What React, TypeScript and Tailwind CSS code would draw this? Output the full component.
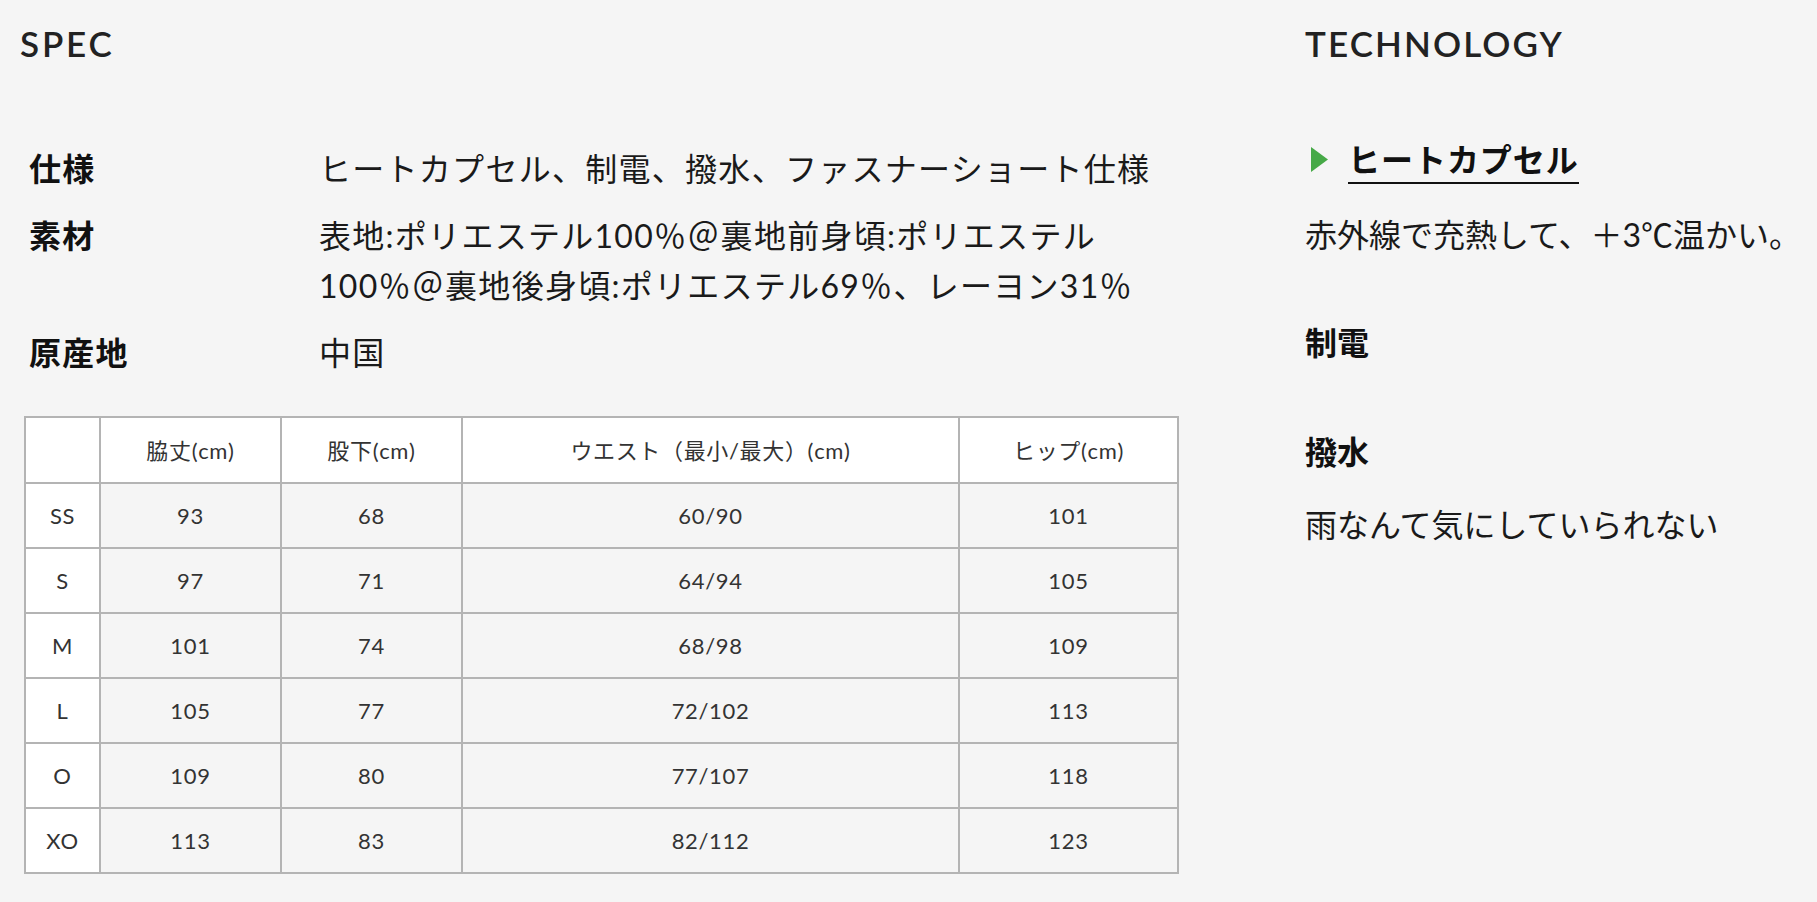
import React from "react";

// サイズ表データ
const sizeRows = [
  { size: "SS", length: "93", inseam: "68", waist: "60/90", hip: "101" },
  { size: "S", length: "97", inseam: "71", waist: "64/94", hip: "105" },
  { size: "M", length: "101", inseam: "74", waist: "68/98", hip: "109" },
  { size: "L", length: "105", inseam: "77", waist: "72/102", hip: "113" },
  { size: "O", length: "109", inseam: "80", waist: "77/107", hip: "118" },
  { size: "XO", length: "113", inseam: "83", waist: "82/112", hip: "123" },
];

const specs = [
  { label: "仕様", value: ["ヒートカプセル、制電、撥水、ファスナーショート仕様"] },
  {
    label: "素材",
    value: [
      "表地:ポリエステル100％＠裏地前身頃:ポリエステル",
      "100％＠裏地後身頃:ポリエステル69％、レーヨン31％",
    ],
  },
  { label: "原産地", value: ["中国"] },
];

function SizeTable() {
  const th = "h-[66px] border-2 border-[#b4b4b4] bg-white font-normal text-center";
  const td = "h-[65px] border-2 border-[#b4b4b4] text-center";
  return (
    <table className="mt-[38px] ml-1 w-[1153px] table-fixed border-collapse border-2 border-[#b4b4b4] text-[22px] tracking-[0.03em] text-[#333]">
      <colgroup>
        <col className="w-[75px]" />
        <col className="w-[181px]" />
        <col className="w-[181px]" />
        <col className="w-[497px]" />
        <col className="w-[219px]" />
      </colgroup>
      <thead>
        <tr>
          <th className={th}></th>
          <th className={th}>脇丈(cm)</th>
          <th className={th}>股下(cm)</th>
          <th className={th}>ウエスト（最小/最大）(cm)</th>
          <th className={th}>ヒップ(cm)</th>
        </tr>
      </thead>
      <tbody>
        {sizeRows.map((row) => (
          <tr key={row.size}>
            <td className={`${td} bg-white`}>{row.size}</td>
            <td className={`${td} bg-[#f5f5f5]`}>{row.length}</td>
            <td className={`${td} bg-[#f5f5f5]`}>{row.inseam}</td>
            <td className={`${td} bg-[#f5f5f5]`}>{row.waist}</td>
            <td className={`${td} bg-[#f5f5f5]`}>{row.hip}</td>
          </tr>
        ))}
      </tbody>
    </table>
  );
}

export default function App() {
  return (
    <div className="min-h-screen w-full bg-[#f5f5f5] font-['Lato','Noto_Sans_CJK_JP',sans-serif] text-[#1a1a1a]">
      <div className="flex pl-5 pt-5">
        {/* SPEC */}
        <section className="w-[1165px] shrink-0">
          <h2 className="text-[35px] font-semibold leading-[46px] tracking-[0.08em] text-[#222]">SPEC</h2>

          <div className="mt-[78px] flex flex-col gap-[17px] pl-[9px]">
            {specs.map((s) => (
              <div key={s.label} className="grid grid-cols-[290px_1fr] text-[32px] leading-[50px] tracking-[0.04em]">
                <div className="font-bold text-[#111]">{s.label}</div>
                <div>
                  {s.value.map((line) => (
                    <div key={line}>{line}</div>
                  ))}
                </div>
              </div>
            ))}
          </div>

          <SizeTable />
        </section>

        {/* TECHNOLOGY */}
        <section className="ml-[120px] flex flex-col">
          <h2 className="text-[35px] font-semibold leading-[46px] tracking-[0.06em] text-[#222]">TECHNOLOGY</h2>

          <div className="mt-[76px] flex items-start">
            <svg width="17" height="25" viewBox="0 0 17 25" className="mt-[5px] ml-[6px]">
              <polygon points="0,0 17,12.5 0,25" fill="#46a947" />
            </svg>
            <span className="ml-[20px] border-b-2 border-[#111] pb-[4px] text-[32px] font-bold leading-[36px] tracking-[0.03em] text-[#111]">
              ヒートカプセル
            </span>
          </div>
          <p className="mt-[26px] text-[32px] leading-[50px]">赤外線で充熱して、＋3℃温かい。</p>

          <h3 className="mt-[58px] text-[32px] font-bold leading-[50px] text-[#111]">制電</h3>

          <h3 className="mt-[59px] text-[32px] font-bold leading-[50px] text-[#111]">撥水</h3>
          <p className="mt-[23px] text-[32px] leading-[50px]">雨なんて気にしていられない</p>
        </section>
      </div>
    </div>
  );
}
